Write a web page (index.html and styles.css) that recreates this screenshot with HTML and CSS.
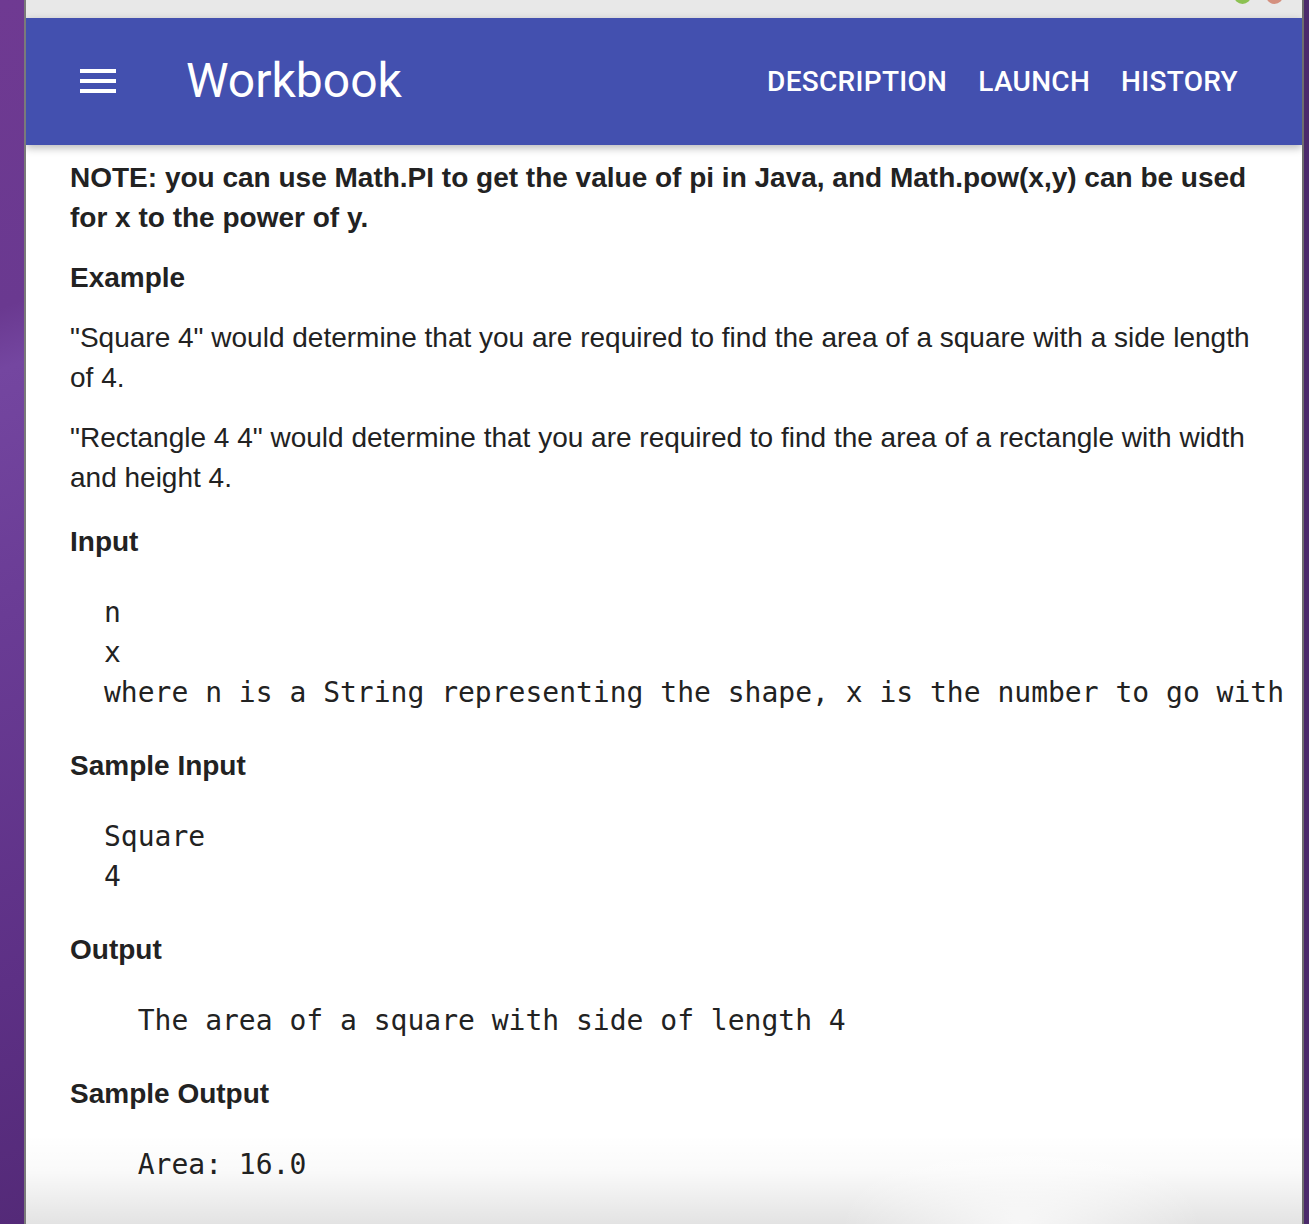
FILE: index.html
```html
<!DOCTYPE html>
<html lang="en">
<head>
<meta charset="utf-8">
<title>Workbook</title>
<link rel="stylesheet" href="styles.css">
</head>
<body>
<div class="desktop">
  <div class="side side-left"></div>
  <div class="window">
    <div class="titlebar">
      <span class="dot dot-green"></span>
      <span class="dot dot-red"></span>
    </div>
    <header class="appbar">
      <div class="menu" aria-label="menu">
        <span></span><span></span><span></span>
      </div>
      <div class="title">Workbook</div>
      <nav class="nav">
        <a>DESCRIPTION</a>
        <a>LAUNCH</a>
        <a>HISTORY</a>
      </nav>
    </header>
    <main class="content">
      <p class="note">NOTE: you can use Math.PI to get the value of pi in Java, and Math.pow(x,y) can be used for x to the power of y.</p>
      <p class="sub">Example</p>
      <p>"Square 4" would determine that you are required to find the area of a square with a side length of 4.</p>
      <p>"Rectangle 4 4" would determine that you are required to find the area of a rectangle with width and height 4.</p>
      <h4>Input</h4>
      <pre>n
x
where n is a String representing the shape, x is the number to go with</pre>
      <h4>Sample Input</h4>
      <pre>Square
4</pre>
      <h4>Output</h4>
      <pre>  The area of a square with side of length 4</pre>
      <h4>Sample Output</h4>
      <pre>  Area: 16.0</pre>
    </main>
    <div class="fade"></div>
  </div>
  <div class="side side-right"></div>
</div>
</body>
</html>
```

FILE: styles.css
```css
html, body {
  margin: 0;
  padding: 0;
  height: 100%;
}
body {
  background: #5a2f80;
  overflow: hidden;
}
.desktop {
  display: flex;
  height: 1224px;
}
.side {
  flex: none;
}
.side-left {
  width: 24px;
  background: linear-gradient(160deg, #6f3a92 0%, #6a3990 25%, #7446a0 30%, #6a3c95 50%, #5d3085 80%, #542a78 100%);
  border-right: 2px solid #7a7a7a;
}
.side-right {
  width: 5px;
  background: #4b2a6b;
  border-left: 2px solid #6e6e6e;
}
.window {
  flex: 1;
  position: relative;
  background: #ffffff;
  overflow: hidden;
  display: flex;
  flex-direction: column;
}
.titlebar {
  height: 18px;
  background: #e8e8e8;
  position: relative;
  flex: none;
}
.dot {
  position: absolute;
  top: -13px;
  width: 17px;
  height: 17px;
  border-radius: 50%;
}
.dot-green {
  left: 1208px;
  background: #8cc152;
}
.dot-red {
  left: 1240px;
  background: #d4907f;
}
.appbar {
  flex: none;
  height: 127px;
  background: #4350af;
  display: flex;
  align-items: center;
  color: #ffffff;
  font-family: Roboto, "Noto Sans", sans-serif;
  box-shadow: 0 3px 8px rgba(0, 0, 0, 0.28);
  position: relative;
  z-index: 2;
  padding: 0 64px 0 54px;
}
.menu {
  width: 36px;
  display: flex;
  flex-direction: column;
  gap: 6px;
  margin-top: -2px;
}
.menu span {
  display: block;
  height: 4px;
  background: #ffffff;
}
.title {
  margin-left: 70px;
  font-size: 48px;
  font-weight: 400;
  line-height: 1;
  margin-top: -2px;
}
.nav {
  margin-left: auto;
  display: flex;
  gap: 31px;
}
.nav a {
  font-size: 28px;
  font-weight: 500;
  letter-spacing: 0.3px;
  color: #ffffff;
  line-height: 1;
}
.content {
  padding: 13px 44px 40px 44px;
  color: #222222;
  font-family: "Liberation Sans", Arial, sans-serif;
  font-size: 28px;
  line-height: 40px;
}
.content p {
  margin: 0 0 20px 0;
}
.content .note,
.content .sub {
  font-weight: 700;
}
.content h4 {
  margin: 24px 0 0 0;
  font-size: 28px;
  line-height: 40px;
  font-weight: 700;
}
.content pre {
  margin: 31px 0 33px 34px;
  font-family: "DejaVu Sans Mono", monospace;
  font-size: 28px;
  line-height: 40px;
  color: #222222;
  white-space: pre;
}
.fade {
  position: absolute;
  left: 0;
  right: 0;
  bottom: 0;
  height: 90px;
  background:
    radial-gradient(ellipse 180px 90px at 78% 100%, rgba(255,255,255,0.7), rgba(255,255,255,0) 100%),
    linear-gradient(to bottom, rgba(0,0,0,0) 0%, rgba(0,0,0,0.02) 40%, rgba(0,0,0,0.11) 100%);
  pointer-events: none;
}
```
